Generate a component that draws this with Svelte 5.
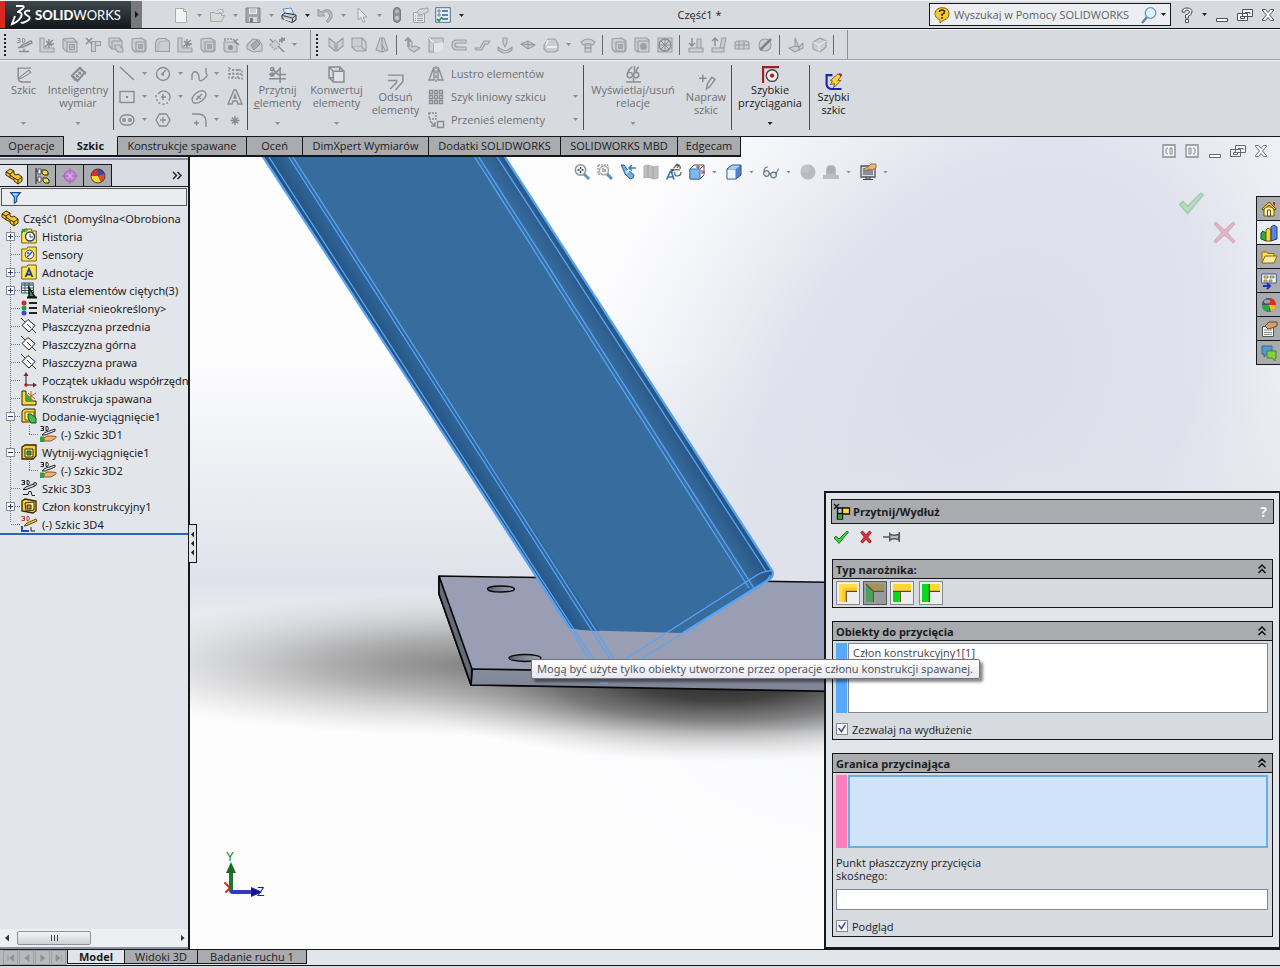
<script>
  const G = 'fill="#cbcdd0" stroke="#9c9ea1" stroke-width="1.1" stroke-linejoin="round"';
  const L = 'fill="none" stroke="#8b8d90" stroke-width="1.4"';
  const I = {
    page: `<path d="M2.5 1.5h8l3 3v11h-11z" fill="#f3f3f4" stroke="#aaacae"/><path d="M10.500 1.500v3h3" fill="none" stroke="#aaacae"/>`,
    open: `<path d="M1.500 14.500v-9h4l1 1h6v2h3l-3 6z" fill="#d7d8da" stroke="#a8aaac"/><path d="M8 4q2-3 5-1l1-1v4h-4l1.500-1.500" fill="#eee" stroke="#a8aaac"/>`,
    save: `<path d="M1 1h14v14.500H1z" fill="#a3a5a7" stroke="#858789"/><path d="M4 1.500h8v5.500H4z" fill="#eee"/><path d="M5 3h6M5 5h6" stroke="#aaa"/><path d="M4 10h8v5H4z" fill="#d8d8d8"/><path d="M5 11h3v4H5z" fill="#777"/>`,
    print: `<path d="M4 7L2 2l8-1 3 6z" fill="#dceafa" stroke="#5b8ecb"/><path d="M1 8l3-2 11 2v5l-4 2.500L1 11.500z" fill="#c9cccf" stroke="#333"/><path d="M1.500 8.500l10 2.500 3-2.500M11.500 11v4" fill="none" stroke="#444"/><path d="M3 12l7 2" stroke="#fff"/>`,
    undo: `<path d="M1 2v7h7L5.500 6.500Q10 3 12 6.500T9 14l1.500 1.500Q17 11 14.500 5.500T4 5z" fill="#b9bbbd" stroke="#96989a"/>`,
    cursor: `<path d="M5 1v12l3-2.500 2 5 2-1-2-4.500h4z" fill="#e7e8ea" stroke="#a2a4a6"/>`,
    light: `<rect x="4.500" y=".5" width="7" height="15" rx="3.500" fill="#8f9193" stroke="#77797b"/><circle cx="8" cy="4.500" r="2" fill="#b5b7b9"/><circle cx="8" cy="11" r="2.200" fill="#c5c7c9"/>`,
    props: `<path d="M1.500 5.500h11v10h-11z" fill="#e9e9ea" stroke="#9fa1a3"/><path d="M3 9h1m1 0h6M3 11.500h1m1 0h6M3 13.500h1m1 0h6" stroke="#999"/><path d="M5 5l3-3 8-1v4l-5 2-4 1z" fill="#d3d4d6" stroke="#a2a4a6"/>`,
    options: `<path d="M.7.700h14.600v14.600H.7z" fill="#e8f1fa" stroke="#4e6e92"/><path d="M3 3h2v2H3zM3 7h2v2H3z" fill="#fff" stroke="#5a7a9c"/><path d="M7 4h6M7 8h6M7 12h6" stroke="#37618f" stroke-width="1.300"/><path d="M2 12l2 2 3-4" fill="none" stroke="#23a03a" stroke-width="1.800"/>`,
    sk3d: `<path d="M1 1.500h3v4H1M2 3.500h2M6.500 1.500v4h1.500q2-2 0-4z" fill="none" stroke="#8f9193"/><path d="M15 4l1 2-9 4-3 .500 2-2.500zM4 10.500l-2 0M3 14.500h5v-3M8 14.500h5" ${L} stroke-width="1.200"/>`,
    weld: `<path d="M1 1h4v10h10v4H1z" ${G}/><path d="M6 10L14 3M10 2v9M7 4l6 5M15 7H8" ${L} stroke-width="1"/>`,
    cube: `<path d="M1 2l10-1 4 4v10H5L1 11z" ${G} fill="#dcdddf"/><path d="M5 5h10M5 5v10M5 5L1 2M7.500 7.500h5v5h-5z" fill="none" stroke="#96989b"/><path d="M8 12l2-4 3 2z" fill="#aaa"/>`,
    trim: `<path d="M6.500 4.500h4v10h-4zM10.500 4.500h5v4h-5z" ${G}/><path d="M1 1l6 6M7 1L1 7" stroke="#8b8d90" stroke-width="1.500"/>`,
    boss: `<path d="M1 1h10l3 3v8H4l-3-3z" ${G} fill="#dcdddf"/><path d="M4 4h10M4 4v8" fill="none" stroke="#96989b"/><path d="M7 8h4l4 4v3h-5l-3-3z" ${G} fill="#aeb0b3"/>`,
    cut: `<path d="M1 2l9-1 5 3v9l-2 2H4l-3-3z" ${G} fill="#dcdddf"/><path d="M5 5h9v9H5z" ${G} fill="#bcbec0"/><path d="M7 7h5v5H7z" fill="#a5a7a9"/>`,
    fillet: `<path d="M1.500 14.500v-9q1-4 5-4h5l4 3v10z" ${G} fill="#d6d7d9"/><path d="M4 14V8q1-4 5-4h6" fill="none" stroke="#b0b2b4"/>`,
    holes: `<path d="M1 5h10l3 2v8H3l-2-2z" ${G}/><circle cx="7.500" cy="10.500" r="2.500" fill="#909294"/><path d="M2 1v3M5 1v2M8 1v2M10 2l6 6M15 2l-4 3" ${L} stroke-width="1"/>`,
    chamfer: `<path d="M1 8l6-6 6 1 3 5v6l-8 1-7-3z" ${G} fill="#d8d9db"/><path d="M5 8l6-5 3 4-6 6z" fill="#a9abad" stroke="#8f9193"/>`,
    ref: `<path d="M1 8l5-5 5 5-5 5z" ${G} fill="#dcdddf" stroke-dasharray="2 1"/><path d="M9 9l6 6M10 5l6-4M13 0v6M10 3h6M1 2l3 3" ${L} stroke-width="1"/>`,
    loft: `<path d="M1 1l6 5v8L1 9zM15 1L9 6v8l6-5z" ${G}/><path d="M7 14l1 1 1-1V6L8 7 7 6z" fill="#a9abae"/>`,
    bend: `<path d="M1 1h10v9H1z" ${G} fill="#b3b5b8"/><path d="M1 10l4 4h10l-4-4M11 1l4 4v9" ${G}/>`,
    cone: `<path d="M6 1h4l4 12-6 2-6-2z" ${G}/><path d="M8 1v14M8 8l3 5" stroke="#909294"/>`,
    flange: `<path d="M4 3l3 2v5l3-1 5 2-6 4-5-3z" ${G}/><path d="M0 4l3-3 3 3M3 1v9" ${L}/>`,
    miter: `<path d="M1 1h14v5H6v9H1z" ${G} fill="#b3b5b7"/><path d="M6 6l9-1v6l-4 4H6z" fill="#e5e6e7"/><path d="M1 1l5 5" stroke="#fff"/>`,
    hem: `<path d="M15 3H6Q1 3 1 8t5 5h9v-3H7Q4 10 4 8t3-2h8z" ${G}/>`,
    jog: `<path d="M1 11l5 0 4-7h6l-2 3h-3L8 13H2z" ${G}/>`,
    sbend: `<path d="M6 1h4v5l-2 4-2-4zM1 10q7 7 14 0v3q-7 6-14 0z" ${G}/>`,
    cross: `<path d="M1 7l7-3 7 4-7 4z" ${G}/><path d="M1 7l14 1M8 4v8" stroke="#909294"/>`,
    corner: `<path d="M1 8l4-6h7l3 5v6l-3 2H4l-3-3z" ${G}/><path d="M4 10h10M5 3l-2 5" stroke="#eee" stroke-width="2"/>`,
    form: `<path d="M1 5q7-6 14 0l-2 3q-5-3-10 0zM5 8h6v7H5z" ${G}/><path d="M5 11h6" stroke="#888"/>`,
    vent: `<rect x="1" y="1" width="14" height="14" ${G} fill="#ddd"/><circle cx="8" cy="8" r="6" ${L}/><path d="M8 2v12M2 8h12M4 4l8 8M12 4l-8 8" stroke="#8b8d90"/>`,
    ball: `<path d="M1 1h11l3 2v12H4l-3-2z" ${G} fill="#ddd"/><path d="M4 4h11M4 4v11" stroke="#999"/><circle cx="9.500" cy="9.500" r="3.500" fill="#9fa1a4"/>`,
    down: `<path d="M4 1v7M1 6l3 3 3-3" ${L}/><path d="M9 2h4v9H9zM1 11h14v4H1z" ${G}/>`,
    up: `<path d="M4 9V2M1 4l3-3 3 3" ${L}/><path d="M11 1h4l-2 10H9zM1 11h12v4H1z" ${G}/>`,
    flat: `<path d="M1 12V7q0-3 3-3h8q3 0 3 3v5z" ${G}/><path d="M5 4v8M10 4v8M1 8h14" stroke="#999"/>`,
    nobend: `<circle cx="8" cy="8" r="6" ${G} stroke-width="2.500"/><path d="M3 13L14 2" stroke="#808284" stroke-width="2.500"/>`,
    rip: `<path d="M7 1v8l-6 2 6 4 8-4V6l-4 4z" ${G}/><path d="M7 9l4 1v4" fill="none" stroke="#909294"/>`,
    conv: `<path d="M2 5l7-4 6 3v6l-6 5-7-3z" ${G}/><path d="M2 5l6 3 7-4M8 8v7" fill="none" stroke="#eee"/>`,
    sketch: `<path d="M15 2H3v9q0 4 4 4h8" ${L} stroke-width="2"/><path d="M5 10l8-6 2 2-8 5-3 1z" fill="#e0e1e3" stroke="#8b8d90"/>`,
    dim: `<path d="M2 9l7-7 5 4-7 8z" fill="none" stroke="#8b8d90" stroke-width="2"/><path d="M6 10l4-4M6 7.500V10h2.500M7.500 6H10v2.500M1 9l4 5M9 1l2 1M14 6l1 2" fill="none" stroke="#8b8d90"/>`,
    line: `<path d="M1 1l14 13" ${L} stroke-width="2"/>`,
    circle: `<circle cx="8" cy="8" r="6.500" ${L}/><path d="M7 8l4-4M6 8h3M8 7v3" ${L}/>`,
    spline: `<path d="M1 14V9q1-4 4-3t3 6 5 1 2-6V2" ${L} stroke-width="1.800"/>`,
    plane: `<path d="M2 2l4 2h9v9l-4-1H2z" ${L} stroke-width="1" stroke-dasharray="2 1.500"/><path d="M6 3v10M11 3v9M2 8h13" ${L} stroke-width="1" stroke-dasharray="2 1.500"/>`,
    rect: `<rect x="1" y="2.500" width="14" height="11" ${L} stroke-width="1.600"/><path d="M7 7h2v2H7z" fill="#888"/>`,
    arc: `<path d="M3 5Q7 0 12 3t2 8" ${L} stroke-width="1.800"/><path d="M1 6q0 8 6 9t7-4" ${L} stroke-dasharray="2 2"/><path d="M6 8h5M8 5v6" ${L} stroke-width="1"/>`,
    ellipse: `<ellipse cx="8" cy="8" rx="8" ry="4.800" transform="rotate(-38 8 8)" ${L}/><path d="M5 11l6-6M6 7l4 3" ${L} stroke-width="1"/>`,
    text: `<path d="M1 15l6-14h2l6 14h-4l-1-3H6l-1 3z" ${L} stroke-width="1.200"/><path d="M7 9l1-3 1 3z" ${L} stroke-width="1"/>`,
    slot: `<rect x="1" y="3" width="14" height="10" rx="5" ${L} stroke-width="1.700"/><path d="M4 7h2v2H4zM10 7h2v2h-2z" ${L} stroke-width="1"/>`,
    poly: `<path d="M4.500 2h7l3.500 6-3.500 6h-7L1 8z" ${L} stroke-width="1.600"/><path d="M5 8h6M8 5v6" ${L}/>`,
    fil: `<path d="M1 2h6q8 0 8 8v5" ${L} stroke-width="1.800"/><path d="M3 11h5M5.500 8.500v5" ${L} stroke-width="1"/>`,
    point: `<path d="M8 4v9M3.500 8.500h9M5 5.500l6 6M11 5.500l-6 6" ${L} stroke-width="1"/>`,
    cutline: `<path d="M0 8h5M11 8h5M0 12h16" ${L} stroke-width="2"/><path d="M10.500 1v15M3 3l7 6M3 9l7-6" ${L}/><circle cx="3" cy="3" r="1.500" ${L} stroke-width="1"/><circle cx="3" cy="8" r="1.500" ${L} stroke-width="1"/>`,
    box: `<path d="M1 1h10v10H1zM5 5L1 1M11 1l4 4M1 11l4 4" ${L}/><path d="M5 5h10v10H5z" fill="#e2e3e5" stroke="#8b8d90" stroke-width="1.400"/>`,
    offset: `<path d="M1 2h14v6l-7 8M1 7h8v2l-6 6" ${L} stroke-width="2"/>`,
    mirror: `<path d="M6 1L1 14h5V1M10 1l5 13h-5V1" ${L}/><path d="M8 0v16" stroke="#8b8d90" stroke-width="1.400" stroke-dasharray="3 1.500"/>`,
    pattern: `<path d="M1.500 1.500h3v3h-3zM6.500 1.500h3v3h-3zM11.500 1.500h3v3h-3zM1.500 6.500h3v3h-3zM6.500 6.500h3v3h-3zM11.500 6.500h3v3h-3zM1.500 11.500h3v3h-3zM6.500 11.500h3v3h-3zM11.500 11.500h3v3h-3z" ${L} stroke-width="1.200"/>`,
    move: `<path d="M1 1h7v6H1z" ${L} stroke-dasharray="2 1"/><path d="M9.500 9.500h6v6h-6z" ${L} stroke-width="1.800"/><path d="M2 9l5 5M3 14h4v-4" ${L}/>`,
    relation: `<path d="M1 15h14" ${L} stroke-width="2"/><path d="M2 8q2-6 5-7M9 0v7M13 1q-3 2-2 6" ${L} stroke-width="1.200"/><circle cx="4.500" cy="8.500" r="2.500" ${L}/><circle cx="10.500" cy="8.500" r="2.500" ${L}/><path d="M8 11v4" ${L}/>`,
    repair: `<path d="M1 5h7M4.500 1.500v7" ${L} stroke-width="1.800"/><path d="M8 15l1-5 4-6 3 2-5 7z" ${L} stroke-width="1"/>`,
    snaps: `<path d="M1 16V1h15" fill="none" stroke="#a51d22" stroke-width="2"/><circle cx="9.500" cy="9" r="5.500" fill="#eceef0" stroke="#444" stroke-width="1.300"/><circle cx="9.500" cy="9" r="2" fill="#d20d18"/>`,
    rapid: `<path d="M7 2H1.500v9q1 4 5 4h9" fill="none" stroke="#1d20b5" stroke-width="2"/><path d="M5 7l7-6 4 1-4 5h3l-7 7 1-4-4 1 2-3.500z" fill="#ffd43a" stroke="#6d4d14" stroke-width=".8"/><path d="M13 0l3 1-1.500 3z" fill="#a22"/>`,
    bubble: `<path d="M8 .7q7 0 7 6 0 5-5 6.300L6 16V13Q1 11 1 6.500 1.500 1 8 .700z" fill="#f5c837" stroke="#8b6508"/><path d="M5.500 5q0-2 2.500-2t2.500 2Q10.500 6.500 8 7.500V9" fill="none" stroke="#3a2c05" stroke-width="1.500"/><path d="M7.200 10h1.700v1.700H7.200z" fill="#3a2c05"/>`,
    search: `<path d="M6 10l-5 6" stroke="#5e87ac" stroke-width="2.500"/><circle cx="9.500" cy="6" r="5.300" fill="#e1f1fb" stroke="#6d9abd" stroke-width="1.300"/>`,
    help: `<path d="M3 5q0-4 5-4t5 4q0 3-3.500 4v2h-3V8q4-1 4-3t-2.500-2T5.500 5.500zM6.500 12.500h3v3h-3z" fill="#fff" stroke="#4c4e51"/>`,
    min: `<path d="M2.500 11.500h11v3h-11z" fill="#fff" stroke="#505258"/>`,
    restore: `<path d="M5.500 2.500h10v7h-10zM.5 6.500h10v7H.5z" fill="#f5f6f8" stroke="#505258"/><path d="M3.500 9.500h4v2h-4zM8 5.500h5v1.500" fill="none" stroke="#505258"/>`,
    close: `<path d="M2.500 2.500h3L8 5.500l2.500-3h3v1L9.500 8l4 4.500v1h-3L8 10.500l-2.500 3h-3v-1L6.500 8l-4-4.500z" fill="#fff" stroke="#505258"/>`,
    paneL: `<path d="M2 2h12v12H2z" fill="#f4f5f8" stroke="#777a80" stroke-width="1.300"/><path d="M7 5L5 6v4l2 1M9 5h2v6H9z" fill="none" stroke="#777a80"/>`,
    paneR: `<path d="M2 2h12v12H2z" fill="#f4f5f8" stroke="#777a80" stroke-width="1.300"/><path d="M9 5l2 1v4l-2 1M5 5h2v6H5z" fill="none" stroke="#777a80"/>`,
    zoomfit: `<path d="M10 10l5 5" stroke="#5b93cc" stroke-width="3"/><circle cx="6.500" cy="6" r="5.200" fill="#f1f5f8" stroke="#8c9196" stroke-width="1.500"/><path d="M6.500 3v2M6.500 7v2M3.500 6h2M7.500 6h2" stroke="#333" stroke-width="1.300"/>`,
    zoomarea: `<path d="M10 10l5 5" stroke="#5b93cc" stroke-width="3"/><path d="M1 1h10v9H1z" fill="none" stroke="#777" stroke-dasharray="2 1"/><circle cx="7" cy="6.500" r="4.500" fill="#f1f5f8cc" stroke="#8c9196"/><path d="M6 4v4M8 5v3" stroke="#666"/>`,
    prev: `<path d="M1 1l3 0 3 4 7 6-1 3-3 1-5-5-2-5z" fill="#71b0e5" stroke="#2a659c"/><path d="M6 9l4-4" stroke="#d8efff" stroke-width="2"/><path d="M16 4H9m3-3L9 4l3 2.500" fill="none" stroke="#3e79b3" stroke-width="1.500"/>`,
    section: `<path d="M1 2q4-2 7 0t7 0v12q-4 2-7 0t-7 0z" fill="#bcbec1" stroke="#adafb2"/><path d="M5 2v12M10 3v12" stroke="#a0a2a5"/>`,
    orient: `<path d="M.7 15.500L4 8h1.500L8 15.500M2.500 13h4.500" fill="none" stroke="#3676bb" stroke-width="1.700"/><path d="M8 4q1-3 4-3 3 1 2 4M6 7q2-2 8-1M15 8q0 4-4 4-3 0-2-4M10 0l3 1-2 3M6 9l-1-3 3-1" fill="none" stroke="#555" stroke-width="1.200"/>`,
    views: `<path d="M1 5l4-4h10v10l-4 4H1z" fill="#f6fafe" stroke="#50525a"/><path d="M1 5h10v10H1z" fill="#7fb8ec" stroke="#3f77ad"/><path d="M11 5l4-4" stroke="#555"/><path d="M9 1v4M7 3h4M13 8h3M13 6v4" stroke="#c12d30"/>`,
    style: `<path d="M1 5l5-4h9v10l-5 4H1z" fill="#4c82cb" stroke="#3b4e74"/><path d="M1.500 5.500h8v9h-8z" fill="#eaf4ff"/><path d="M2 5l4-3.500h8L10 5z" fill="#a9cdf3"/>`,
    glasses: `<circle cx="3.500" cy="9.500" r="2.800" fill="#d9eafa" stroke="#6c7681" stroke-width="1.200"/><circle cx="10.500" cy="11" r="2.800" fill="#d9eafa" stroke="#6c7681" stroke-width="1.200"/><path d="M1 8q0-5 4-5M6 10q1-1 2 0M13 10q2-5 3-5" fill="none" stroke="#6c7681" stroke-width="1.200"/>`,
    sphere: `<circle cx="8" cy="8" r="7.500" fill="#b9bbbe"/><circle cx="5.500" cy="5" r="4" fill="#c1c3c6"/>`,
    scene: `<path d="M0 15v-4h3V6q0-5 5-5t5 5v5h3v4z" fill="#bcbec1"/><circle cx="8" cy="6" r="4" fill="#adafb2"/>`,
    monitor: `<path d="M1 2h14v11H1z" fill="#dadbdc" stroke="#53565a" stroke-width="1.300"/><path d="M3 4h10v7H3z" fill="#848e9c"/><path d="M3 15.500h10M6 13v2h4v-2" stroke="#444" fill="none"/><path d="M4 5l4-2 3-3h5v4l-4 2-3-1-4 2z" fill="#eeb676" stroke="#875f36" stroke-width=".8"/>`,
    part: `<path d="M0 4l4-3 4 2v3l2 1 2-1 4 3v4l-4 3-4-3v-2l-2 0-6-4z" fill="#f4c62c" stroke="#3b2b00"/><path d="M0 4l4 2 4-3M4 6v4M8 10l4 2 4-3M12 12v4M4 7l4 3" fill="none" stroke="#3b2b00"/>`,
    config: `<path d="M2 0v16M2 3h5M2 12h5" stroke="#222" fill="none"/><path d="M4 1h3v5H4zM4 9h3v5H4z" fill="#fff" stroke="#555"/><path d="M8 2h4l2 2v3h-4L8 5zM9 10h4l2 2v3h-4l-2-2z" fill="#ffd633" stroke="#222"/>`,
    target: `<circle cx="8" cy="8" r="5.500" fill="none" stroke="#c45edb" stroke-width="1.600"/><path d="M8 0v16M0 8h16" stroke="#c45edb" stroke-width="1.400"/><circle cx="8" cy="8" r="2" fill="#dca8e5"/>`,
    beach: `<circle cx="8" cy="8" r="7" fill="#286ccf"/><path d="M8 1a7 7 0 0 0-7 7l7 1z" fill="#e22b25"/><path d="M1 8a7 7 0 0 0 10 6L8 8z" fill="#ffd52e"/><path d="M8 1a7 7 0 0 1 6.500 5L8 8z" fill="#3a4aa0"/><path d="M14.500 6L8 8l3 6a7 7 0 0 0 3.500-8z" fill="#e5492d"/><circle cx="8" cy="8" r="7" fill="none" stroke="#333" stroke-width=".8"/>`,
    funnel: `<path d="M2 2h12l-4.500 5.500V13L6.500 15V7.500z" fill="#6fb5f5" stroke="#1c4c9d" stroke-width="1.400"/><path d="M5 4h5" stroke="#fff"/>`,
    hist: `<path d="M.7 3h5l1-2h4v2h4.600v12H.7z" fill="#ffe352" stroke="#7c6408"/><circle cx="9" cy="8.500" r="4.500" fill="#fff" stroke="#283a80" stroke-width="1.400"/><path d="M9 6v3h3" fill="none" stroke="#283a80"/><path d="M1 1l3 3M1 5q1-4 5-4" stroke="#1f9a36" stroke-width="1.500" fill="none"/>`,
    sens: `<path d="M.7 3h5l1-2h8.600v14H.7z" fill="#ffe352" stroke="#7c6408"/><circle cx="8.500" cy="8.500" r="4.300" fill="#eef" stroke="#444"/><path d="M6 11l5-5M6 7h2" stroke="#1c4faf" stroke-width="1.300"/>`,
    ann: `<path d="M.7 3h5l1-2h8.600v14H.7z" fill="#ffe352" stroke="#7c6408"/><path d="M4.500 13L8 5l3.500 8M6 10.500h4" fill="none" stroke="#1c3f8f" stroke-width="1.800"/>`,
    list: `<path d="M.5 1h12v10H.5z" fill="#fff" stroke="#39536b"/><path d="M.5 1h12v3H.5z" fill="#7893ae"/><path d="M.5 6h12M.5 8.500h12M4 1v10M8 1v10" stroke="#39536b"/><path d="M8 5.500V15h6z" fill="#26a643" stroke="#111" stroke-width="1.500"/><path d="M6 15.500h10" stroke="#111" stroke-width="2"/>`,
    mat: `<circle cx="3" cy="3" r="2.500" fill="#d02634"/><circle cx="3" cy="8" r="2.500" fill="#2c9b38"/><circle cx="3" cy="13" r="2.500" fill="#2c4fd0"/><path d="M8 3h8M8 8h8M8 13h8" stroke="#222" stroke-width="1.800"/>`,
    datum: `<path d="M1 7.500l6-6 7 6-6 6.500z" fill="#fafafa" stroke="#222"/><path d="M0 0l4 4M11 11l4 4M6 6l4 4" stroke="#222" stroke-width=".9"/>`,
    origin: `<path d="M5 13V3M5 13h9" stroke="#222"/><path d="M5 0L2.500 4h5zM16 13l-4-2.500v5z" fill="#9c1721"/><circle cx="5" cy="13" r="1.800" fill="#c01b25"/>`,
    weldc: `<path d="M1 1h4v10h10v4H1z" fill="#ffd93c" stroke="#2d2400"/><path d="M5 11V3l8 8z" fill="#3cac47"/><path d="M7 8l8-5M10 1v8M7 3l7 6" stroke="#c2621b"/>`,
    bossc: `<path d="M1 3l3-2h10v9l-3 4H1z" fill="#ffd93c" stroke="#332700"/><path d="M4 4h9v8H4z" fill="#fff4b0" stroke="#665200"/><path d="M7 6h3l5 4v5h-5L7 10z" fill="#4abb51" stroke="#184f1d"/>`,
    cutc: `<path d="M1 3l3-2h11v11l-3 3H1z" fill="#ffcb2f" stroke="#332700" stroke-width="1.300"/><path d="M4 5h8v8H4z" fill="#fff4b0" stroke="#332700"/><path d="M6 7h4v4H6z" fill="#31a341" stroke="#184f1d"/>`,
    sk: `<path d="M.5.500h3v4h-3M1.500 2.500h2M6 .500v4h1.500q2-2 0-4z" fill="none" stroke="#222"/><circle cx="14" cy="4" r="1.500" fill="none" stroke="#222"/><path d="M12.500 4L5 7 2 9.500h3L14 6M2 14.500h5l1-3h2l1 4h3" fill="none" stroke="#222"/>`,
    skhand: `<path d="M.5.500h3v4h-3M1.500 2.500h2M6 .500v4h1.500q2-2 0-4z" fill="none" stroke="#222"/><path d="M15 3L5 6.500 2 9h3l10-4z" fill="#eee" stroke="#222"/><path d="M4 12l3-2h4l5 .500q1 1-1 2l-4 2.500H4z" fill="#eeb477" stroke="#8c5a26"/><path d="M0 10.500h4v5.500H0z" fill="#2fa14d"/>`,
    member: `<path d="M1 3l3-2 11 2v10l-3 2-11-2z" fill="#ffcb2f" stroke="#332700" stroke-width="1.300"/><path d="M4 5l9-1v8l-8 1z" fill="#fff4b0" stroke="#332700"/><path d="M6 7h4v4H6z" fill="#ce952a" stroke="#332700"/>`,
    skact: `<path d="M.5.500h3v4h-3M1.500 2.500h2M6 .500v4h1.500q2-2 0-4z" fill="none" stroke="#b4412c"/><path d="M15 3L6 7 3 10l3-.500L16 5z" fill="#ffc638" stroke="#5b4410"/><path d="M1 10v5h7" fill="none" stroke="#2349c4" stroke-width="2"/><path d="M10 11v4h4" fill="none" stroke="#222"/>`,
    home: `<path d="M3 7v8h10V7" fill="#fff2a0" stroke="#6e4a00"/><path d="M.8 8L8 1l7.200 7-1.200 1L8 4 2 9z" fill="#ffcf3a" stroke="#6e4a00"/><path d="M6.500 9h3v6h-3z" fill="#fff" stroke="#6e4a00"/><path d="M12 1h2v4l-2-2z" fill="#ba2a20"/>`,
    books: `<path d="M0 8l2-2 3 2v8l-5-2z" fill="#2fae3f" stroke="#0e5d1b"/><path d="M5 5l2-2 3 2v11H5z" fill="#ffd42f" stroke="#765900"/><path d="M10 2l3-2 3 2v12l-6 2z" fill="#5b86d6" stroke="#203f83"/>`,
    folder: `<path d="M1 14V3h5l1 1.500h6V7" fill="#ffdd5e" stroke="#8f6a08"/><path d="M1 14l3-7h12l-3 7z" fill="#ffeb9c" stroke="#8f6a08"/>`,
    palette: `<path d="M.7 1h14.600v9H.7z" fill="#f0f5fb" stroke="#3f5f92"/><path d="M3 3h4v2H3zM9 3h4v2H9zM3 7h3v2H3zM8 7h3v2H8z" fill="#f4d943" stroke="#555" stroke-width=".6"/><path d="M2 13h7m-3-3l3 3-3 3" fill="none" stroke="#1f31b5" stroke-width="2"/>`,
    globe: `<circle cx="8" cy="8" r="7" fill="#2a62c4"/><path d="M8 8V1a7 7 0 0 0-7 7z" fill="#4b4f66"/><path d="M8 8h7a7 7 0 0 0-7-7z" fill="#dc3224"/><path d="M8 8H1a7 7 0 0 0 7 7z" fill="#2aaa44"/><path d="M8 8h7a7 7 0 0 1-5 6.500z" fill="#f7bc22"/><ellipse cx="6" cy="4.500" rx="3" ry="2" fill="#fff7"/>`,
    propc: `<path d="M1.500 5.500h11v10h-11z" fill="#f7f7f7" stroke="#555"/><path d="M3 9h8M3 11.500h8M3 13.500h8" stroke="#888"/><path d="M4 5l4-4h8v4l-5 2-4 1z" fill="#d3a26a" stroke="#6a4720"/>`,
    chat: `<path d="M1 1h10v8H6l-3 3V9H1z" fill="#4f9ad0" stroke="#2f6895"/><path d="M6 6h9v7h-1v3l-3-3H6z" fill="#86d03e" stroke="#4d8a1b"/>`,
    check: `<path d="M1 9l2-2 3 3 8-8 1.500 1L6 14.500z" fill="#3fd03f" stroke="#0e7c1b" stroke-width=".9"/>`,
    x: `<path d="M2 3l2-2 4 4.500L12 1l2 2-4 5 4 5-2 2-4-4.500L4 15l-2-2 4-5z" fill="#e03236" stroke="#8c0f14" stroke-width=".9"/>`,
    xthin: `<path d="M1.500 2.500l1-1L8 6.500l5.500-5 1 1L9.500 8l5 5.500-1 1L8 9.500l-5.500 5-1-1 5-5.500z" fill="#e8434a" stroke="#a02028" stroke-width=".8"/>`,
    pin: `<path d="M0 8h6M6 4v8M6 5.500q4 2 8 0v5q-4-2-8 0M14.500 3.500v9" fill="#bcbec0" stroke="#55575a" stroke-width="1.300"/>`,
    trimc: `<path d="M3.500 4h5v11h-5z" fill="#bbb" stroke="#111" stroke-width="1.300"/><path d="M4 10h4v5H4z" fill="#2ea52f"/><path d="M3.500 9.500h5M8.500 4h7v6h-7z" fill="#ffde33" stroke="#111" stroke-width="1.300"/><path d="M0 0l5 5M5 0L0 5" stroke="#111" stroke-width="1.300"/>`,
    c1: `<path d="M0 0h16v6H6v10H0z" fill="#ffc824"/><path d="M0 0h16v3H3v13H0z" fill="#ffdf44"/><path d="M16 6.500H6.500V16" fill="none" stroke="#6b4309"/>`,
    c2: `<path d="M0 0h16v6H6z" fill="#a49257"/><path d="M0 0l6 6v10H0z" fill="#4ba05a"/><path d="M0 0l6.500 6.500V16M6.500 6.500H16" fill="none" stroke="#585033"/>`,
    c3: `<path d="M0 0h16v6H0z" fill="#ffd62f"/><path d="M0 7h6v9H0z" fill="#0ad81e"/><path d="M0 6.500h16M6.500 7v9" stroke="#6b4309"/>`,
    c4: `<path d="M7 0h9v6H7z" fill="#ffd62f"/><path d="M0 0h6.500v16H0z" fill="#0ad81e"/><path d="M6.500 0v16M7 6.500h9" stroke="#594309"/>`,
    up2: `<path d="M4.500 7.500L8 4l3.500 3.500M4.500 12L8 8.500l3.500 3.500" fill="none" stroke="#111" stroke-width="1.500"/>`
  };

  const quick = [['page', 'Nowy', 1], ['open', 'Otwórz', 1], ['save', 'Zapisz', 1], ['print', 'Drukuj', 2], ['undo', 'Cofnij', 1], ['cursor', 'Wybierz', 1], ['light', 'Przebuduj', 0], ['props', 'Właściwości', 0], ['options', 'Opcje', 2]];
  const weldBar = ['sk3d', 'weld', 'cube', 'trim', 'boss', 'cut', 'fillet', 'weld', 'cut', 'holes', 'chamfer', 'ref', '>'];
  const sheetBar = ['loft', 'bend', 'cone', '|', 'flange', 'miter', 'hem', 'jog', 'sbend', 'cross', 'corner', '>', 'form', '|', 'cut', 'ball', 'vent', '|', 'down', 'up', 'flat', 'nobend', '|', 'rip', 'conv', '|'];
  const drawTools = ['line', 'circle', 'spline', 'plane', 'rect', 'arc', 'ellipse', 'text', 'slot', 'poly', 'fil', 'point'];
  const noArrow = ['poly'];
  const tabs = ['Operacje', 'Szkic', 'Konstrukcje spawane', 'Oceń', 'DimXpert Wymiarów', 'Dodatki SOLIDWORKS', 'SOLIDWORKS MBD', 'Edgecam'];
  const tree = [
    ['hist', 'Historia', '+'], ['sens', 'Sensory'], ['ann', 'Adnotacje', '+'], ['list', 'Lista elementów ciętych(3)', '+'],
    ['mat', 'Materiał <nieokreślony>'], ['datum', 'Płaszczyzna przednia'], ['datum', 'Płaszczyzna górna'], ['datum', 'Płaszczyzna prawa'],
    ['origin', 'Początek układu współrzędn'], ['weldc', 'Konstrukcja spawana'], ['bossc', 'Dodanie-wyciągnięcie1', '−'],
    ['skhand', '(-) Szkic 3D1', '', 1], ['cutc', 'Wytnij-wyciągnięcie1', '−'], ['skhand', '(-) Szkic 3D2', '', 1],
    ['sk', 'Szkic 3D3'], ['member', 'Człon konstrukcyjny1', '+'], ['skact', '(-) Szkic 3D4']
  ];
  const viewTools = ['zoomfit', 'zoomarea', 'prev', 'section', 'orient', 'views', '>', 'style', '>', 'glasses', '>', 'sphere', 'scene', '>', 'monitor', '>'];
  const taskTabs = ['home', 'books', 'folder', 'palette', 'globe', 'propc', 'chat'];
  let bodies = $state('Człon konstrukcyjny1[1]');
  let extend = $state(true);
  let preview = $state(true);
  let corner = $state(1);
</script>

{#snippet icon(name, size = 16)}
  <svg class="ic" width={size} height={size} viewBox="0 0 16 16" aria-hidden="true">{@html I[name]}</svg>
{/snippet}

{#snippet big(name, a, b, arrow, cls)}
  <button class="big {cls}">
    {@render icon(name, 17)}
    <span>{a}</span><span>{b}</span>
    {#if arrow}<i class="arr"></i>{/if}
  </button>
{/snippet}

<div class="app">
  <header class="title">
    <div class="brand">
      <svg width="24" height="22" viewBox="0 0 24 22" aria-hidden="true"><path d="M7 2h7q2 1-1 3l-4 3M8 8h2q4 1 2 5-3 5-9 7l3-8M21 7q-4-1-5 1t3 4-1 5-6 1" fill="none" stroke="#fff" stroke-width="1.900"/></svg>
      <span class="word"><b>SOLID</b>WORKS</span>
    </div>
    <button class="flyout" aria-label="Menu"><i></i></button>
    <div class="quick">
      {#each quick as [n, label, a]}
        <button class="qb" aria-label={label}>{@render icon(n)}</button>
        {#if a}<i class="arr wide" class:dark={a === 2}></i>{/if}
      {/each}
    </div>
    <h1>Część1 *</h1>
    <div class="search">
      {@render icon('bubble')}
      <input type="text" aria-label="Wyszukaj" placeholder="Wyszukaj w Pomocy SOLIDWORKS" />
      {@render icon('search')}
      <i class="arr dark"></i>
    </div>
    <div class="wins">
      <button aria-label="Pomoc">{@render icon('help')}</button>
      <i class="arr dark"></i>
      <button aria-label="Minimalizuj">{@render icon('min')}</button>
      <button aria-label="Przywróć">{@render icon('restore')}</button>
      <button aria-label="Zamknij">{@render icon('close')}</button>
    </div>
  </header>

  <div class="bar">
    <div class="strip">
      <i class="grip"></i>
      {#each weldBar as n}
        {#if n === '>'}<i class="arr mid"></i>{:else}<button class="tb" aria-label={n}>{@render icon(n)}</button>{/if}
      {/each}
    </div>
    <div class="strip second">
      <i class="grip"></i>
      {#each sheetBar as n}
        {#if n === '>'}<i class="arr mid"></i>{:else if n === '|'}<i class="sep"></i>{:else}<button class="tb" aria-label={n}>{@render icon(n)}</button>{/if}
      {/each}
    </div>
  </div>

  <div class="ribbon">
    {@render big('sketch', 'Szkic', '', true, 'w46')}
    {@render big('dim', 'Inteligentny', 'wymiar', true, 'w62')}
    <i class="rule"></i>
    <div class="draw">
      {#each drawTools as n, i}
        <button class="dt" aria-label={n}>{@render icon(n)}{#if i % 4 !== 3}<i class="arr" class:hid={noArrow.includes(n)}></i>{/if}</button>
      {/each}
    </div>
    <i class="rule"></i>
    <button class="big w60">{@render icon('cutline', 17)}<span>Przytnij</span><span><u>e</u>lementy</span><i class="arr"></i></button>
    {@render big('box', 'Konwertuj', 'elementy', true, 'w60')}
    {@render big('offset', 'Odsuń', 'elementy', false, 'w60 low')}
    <div class="lines">
      <button>{@render icon('mirror')}<span>Lustro elementów</span></button>
      <button>{@render icon('pattern')}<span>Szyk liniowy szkicu</span><i class="arr"></i></button>
      <button>{@render icon('move')}<span>Przenieś elementy</span><i class="arr"></i></button>
    </div>
    <i class="rule"></i>
    {@render big('relation', 'Wyświetlaj/usuń', 'relacje', true, 'w98')}
    {@render big('repair', 'Napraw', 'szkic', false, 'w48 low')}
    <i class="rule"></i>
    {@render big('snaps', 'Szybkie', 'przyciągania', true, 'w76 on')}
    <i class="rule"></i>
    {@render big('rapid', 'Szybki', 'szkic', false, 'w46 on low')}
  </div>

  <main>
    <nav class="tabs">
      {#each tabs as t, i}<button class:active={i === 1}>{t}</button>{/each}
    </nav>

    <aside>
      <div class="ptabs">
        {#each ['part', 'config', 'target', 'beach'] as n, i}
          <button class:active={i === 0} aria-label={n}>{@render icon(n)}</button>
        {/each}
        <button class="more" aria-label="Więcej"><svg width="10" height="9" viewBox="0 0 10 9"><path d="M1 1l3.500 3.500L1 8M5.500 1L9 4.500 5.500 8" fill="none" stroke="#222" stroke-width="1.400"/></svg></button>
      </div>
      <label class="filter">{@render icon('funnel', 13)}<input type="text" aria-label="Filtr" /></label>
      <div class="root">{@render icon('part')}<span>Część1&nbsp; (Domyślna&lt;Obrobiona</span></div>
      <ul>
        {#each tree as [n, label, ex, nested]}
          <li class:nested>
            {#if ex}<button class="ex" aria-label="Rozwiń {label}"><svg width="9" height="9" viewBox="0 0 9 9"><path d={ex === '+' ? 'M2 4.500h5M4.500 2v5' : 'M2 4.500h5'} stroke="#2c3c78"/></svg></button>{/if}
            {@render icon(n)}<span>{label}</span>
          </li>
        {/each}
      </ul>
      <div class="rollback"></div>
      <div class="hscroll">
        <button class="lt" aria-label="W lewo"></button>
        <div class="thumb"><i></i><i></i><i></i></div>
        <button class="rt" aria-label="W prawo"></button>
      </div>
      <button class="split" aria-label="Zwiń panel"><i></i><i></i><i></i></button>
    </aside>

    <section class="view">
      <svg class="scene" viewBox="190 137 1090 813" preserveAspectRatio="xMinYMin slice" aria-hidden="true">
        <defs>
          <radialGradient id="sky" gradientUnits="userSpaceOnUse" cx="0" cy="0" r="1" gradientTransform="translate(980 400) rotate(-55) scale(560 390)">
            <stop offset="0" stop-color="#dadde8"/><stop offset=".5" stop-color="#e0e3ed"/><stop offset="1" stop-color="#e8eaf2" stop-opacity="0"/>
          </radialGradient>
          <linearGradient id="haze" x1="0" y1="0" x2="0" y2="1">
            <stop offset="0" stop-color="#dde0e9" stop-opacity="0"/><stop offset=".6" stop-color="#dfe2ea"/><stop offset="1" stop-color="#f2f3f5" stop-opacity="0"/>
          </linearGradient>
          <radialGradient id="shadeA" gradientUnits="userSpaceOnUse" cx="0" cy="0" r="1" gradientTransform="translate(720 680) scale(330 82)">
            <stop offset="0" stop-color="#2c2c2c"/><stop offset=".25" stop-color="#3c3c3c" stop-opacity=".97"/><stop offset=".5" stop-color="#5c5c5c" stop-opacity=".75"/><stop offset=".75" stop-color="#8a8a8a" stop-opacity=".35"/><stop offset="1" stop-color="#bbb" stop-opacity="0"/>
          </radialGradient>
          <radialGradient id="shadeB" gradientUnits="userSpaceOnUse" cx="0" cy="0" r="1" gradientTransform="translate(480 665) scale(400 72)">
            <stop offset="0" stop-color="#6c6c6c" stop-opacity=".9"/><stop offset=".4" stop-color="#858585" stop-opacity=".6"/><stop offset="1" stop-color="#bbb" stop-opacity="0"/>
          </radialGradient>
          <linearGradient id="tubeL" gradientUnits="userSpaceOnUse" x1="400" y1="369" x2="442" y2="342">
            <stop offset="0" stop-color="#24527f"/><stop offset=".35" stop-color="#2e6296"/><stop offset="1" stop-color="#376c9f"/>
          </linearGradient>
          <linearGradient id="tubeR" gradientUnits="userSpaceOnUse" x1="600" y1="350" x2="632" y2="330">
            <stop offset="0" stop-color="#376c9f"/><stop offset="1" stop-color="#204a76"/>
          </linearGradient>
          <linearGradient id="front" x1="0" y1="0" x2="0" y2="1"><stop offset="0" stop-color="#888c9f"/><stop offset="1" stop-color="#7c8093"/></linearGradient>
          <linearGradient id="hole"><stop offset="0" stop-color="#60636f"/><stop offset="1" stop-color="#a2a6b4"/></linearGradient>
        </defs>
        <path d="M190 137h1090v813H190z" fill="#fdfdfe"/>
        <path d="M190 137h1090v813H190z" fill="url(#sky)"/>
        <path d="M190 360h1090v370H190z" fill="url(#haze)"/>
        <path d="M190 730h1090v220H190z" fill="#fdfdfe" opacity=".8"/>
        <path d="M190 590h700v170H190z" fill="url(#shadeB)"/>
        <path d="M190 590h900v180H190z" fill="url(#shadeA)"/>
        <path d="M439 576l1000 16v104L471 685l-32-91z" fill="#9a9eb4" stroke="#080808" stroke-width="1.500"/>
        <path d="M472 669l968 15v18L471 685z" fill="url(#front)" stroke="#080808" stroke-width="1.700"/>
        <path d="M439 576l33 93-1 16-32-91z" fill="#666a78" stroke="#080808" stroke-width="1.700"/>
        <ellipse cx="501" cy="589" rx="13.500" ry="3" fill="url(#hole)" stroke="#080808" stroke-width="1.300"/>
        <ellipse cx="525" cy="658" rx="16" ry="3.500" fill="url(#hole)" stroke="#080808" stroke-width="1.300"/>
        <path d="M250 137h242l281 436q0 4-3 6l-14 9-73 45-74-2-27-1-13-2z" fill="#376c9f"/>
        <path d="M250 137h27l323 494-18-1-13-2z" fill="url(#tubeL)"/>
        <path d="M465 137h27l281 436q0 4-3 6l-14 9z" fill="url(#tubeR)"/>
        <g fill="none" stroke="#58a4f3" stroke-width="1.300">
          <path d="M250 137l320 491" stroke-width="2.300"/><path d="M256 137L597 665M276 137l336 525M280 137l336 525"/>
          <path d="M492 137l281 435q0 5-3 7l-87 54" stroke-width="2.300"/><path d="M484 137l282 434M462 137l287 451M466 137l289 453"/>
          <path d="M773 571q-7-1-16 4L610 669M770 575q-2 7-15 14"/>
        </g>
        <path d="M570 628l20 33M683 633l-58 36M600 683h8" fill="none" stroke="#6fa3dc" stroke-width="2"/>
        <g stroke-linecap="round"><path d="M225 883l5 5-4 4" stroke="#e3262b" stroke-width="2" fill="none"/><path d="M231 891v-20" stroke="#24752b" stroke-width="4"/><path d="M231 862l-5 11h10z" fill="#1e6b25"/><path d="M232 892h18" stroke="#3439c4" stroke-width="4"/><path d="M262 892l-11-5v10z" fill="#14159b"/></g>
        <text x="226" y="861" fill="#1d7a27" font-size="12">Y</text><text x="257" y="896" fill="#1b1c9b" font-size="12">Z</text>
      </svg>

      <div class="hud">
        {#each viewTools as n}
          {#if n === '>'}<i class="arr mid"></i>{:else}<button class="tb" aria-label={n}>{@render icon(n)}</button>{/if}
        {/each}
      </div>
      <div class="docwins">
        {#each ['paneL', 'paneR', 'min', 'restore', 'close'] as n}<button aria-label={n}>{@render icon(n)}</button>{/each}
      </div>
      <div class="confirm">
        <button aria-label="Potwierdź">{@render icon('check', 26)}</button>
        <button class="no" aria-label="Odrzuć">{@render icon('xthin', 25)}</button>
      </div>
      <div class="task">
        {#each taskTabs as n, i}<button class:active={i === 1} aria-label={n}>{@render icon(n)}</button>{/each}
      </div>

      <form class="pm" onsubmit={(e) => e.preventDefault()}>
        <div class="pmhead">{@render icon('trimc')}<h2>Przytnij/Wydłuż</h2><button type="button" aria-label="Pomoc">?</button></div>
        <div class="pmact">
          <button type="button" aria-label="OK">{@render icon('check')}</button>
          <button type="button" aria-label="Anuluj">{@render icon('x', 14)}</button>
          <button type="button" aria-label="Przypnij">{@render icon('pin', 18)}</button>
        </div>
        <section class="grp">
          <h3>Typ narożnika:{@render icon('up2')}</h3>
          <div class="corners">
            {#each ['c1', 'c2', 'c3', 'c4'] as n, i}
              <button type="button" class:sel={corner === i} aria-label="Narożnik {i + 1}" onclick={() => (corner = i)}>{@render icon(n, 18)}</button>
            {/each}
          </div>
        </section>
        <section class="grp">
          <h3 id="g2">Obiekty do przycięcia{@render icon('up2')}</h3>
          <div class="pick"><i></i><textarea readonly aria-labelledby="g2" bind:value={bodies}></textarea></div>
          <label class="chk"><input type="checkbox" bind:checked={extend} />Zezwalaj na wydłużenie</label>
        </section>
        <section class="grp last">
          <h3 id="g3">Granica przycinająca{@render icon('up2')}</h3>
          <div class="pick pink"><i></i><textarea aria-labelledby="g3"></textarea></div>
          <label class="pt" for="point">Punkt płaszczyzny przycięcia skośnego:</label>
          <input class="ptin" id="point" type="text" />
          <label class="chk"><input type="checkbox" bind:checked={preview} />Podgląd</label>
        </section>
      </form>
      <div class="tip" role="tooltip">Mogą być użyte tylko obiekty utworzone przez operacje członu konstrukcji spawanej.</div>
    </section>
  </main>

  <footer>
    <div class="steps">
      {#each ['M5 4v8M12 4L7 8l5 4z', 'M11 4L6 8l5 4z', 'M6 4l5 4-5 4z', 'M12 4v8M5 4l5 4-5 4z'] as d, i}
        <button aria-label="Przewiń {i + 1}"><svg width="15" height="14" viewBox="0 0 16 16"><path {d} fill="#8f9194" stroke="#8f9194"/></svg></button>
      {/each}
    </div>
    <button class="ft active">Model</button><button class="ft">Widoki 3D</button><button class="ft wide">Badanie ruchu 1</button>
  </footer>
</div>

<style>
  :global(body) { margin: 0; }
  .app { height: 100vh; display: flex; flex-direction: column; padding-bottom: 2px; background: #d7dadf; color: #1b1c1e; font: 11px/13px "Open Sans", "Noto Sans", sans-serif; overflow: hidden; }
  .app, .app * { box-sizing: border-box; }
  button { font: inherit; color: inherit; background: none; border: 0; padding: 0; margin: 0; display: flex; align-items: center; justify-content: center; white-space: nowrap; }
  input, textarea { font: inherit; color: inherit; margin: 0; }
  h1, h2, h3, ul { margin: 0; padding: 0; font: inherit; list-style: none; }
  .ic { display: block; flex: none; overflow: visible; }
  .arr { flex: none; width: 5px; height: 3px; background: #8b8d90; clip-path: polygon(0 0, 100% 0, 50% 100%); }
  .arr.dark { background: #222; }
  .arr.wide { margin: 2px 6px 0 7px; }
  .arr.mid { margin: 0 5px 0 4px; }
  .arr.hid { visibility: hidden; }

  .title { flex: none; height: 29px; display: flex; align-items: center; border-top: 1px solid #f2f3f5; border-bottom: 1px solid #16171a; }
  .brand { align-self: stretch; width: 131px; display: flex; align-items: center; gap: 2px; padding-left: 4px; border-left: 5px solid #d9291f; background: linear-gradient(#3d474d, #13191d); color: #fff; }
  .word { font: 13px/16px Lato, sans-serif; }
  .word b { font-weight: 900; }
  .flyout { align-self: stretch; width: 11px; background: #77797c; }
  .flyout i { width: 4px; height: 8px; background: #111; clip-path: polygon(0 0, 100% 50%, 0 100%); }
  .quick { display: flex; align-items: center; margin-left: 30px; }
  .qb { width: 18px; height: 24px; }
  .qb + .qb { margin-left: 5px; }
  h1 { flex: 1; text-align: center; font-size: 11px; }
  .search { width: 242px; height: 23px; display: flex; align-items: center; gap: 4px; padding: 0 4px; border: 1px solid #16171a; background: #eceef1; }
  .search input { flex: 1; min-width: 0; border: 0; padding: 0; background: none; outline: 0; }
  .search input::placeholder { color: #5f6165; opacity: 1; }
  .wins { display: flex; align-items: center; gap: 7px; padding: 0 4px 0 8px; }

  .bar { flex: none; height: 31px; display: flex; border-bottom: 1px solid #9b9da1; border-top: 1px solid #f2f3f5; }
  .strip { display: flex; align-items: center; padding: 0 8px 0 4px; border-right: 1px solid #8d8f93; }
  .strip.second { padding: 0 9px 0 5px; }
  .grip { width: 2px; height: 22px; margin-right: 6px; background: repeating-linear-gradient(#222 0 2px, transparent 2px 4px); }
  .tb { width: 23px; height: 24px; }
  .sep { width: 1px; height: 20px; margin: 0 4px 0 3px; background: #66686c; }

  .ribbon { flex: none; height: 77px; display: flex; border-top: 1px solid #f2f3f5; border-bottom: 1px solid #16171a; color: #6e7074; padding-top: 4px; }
  .big { flex-direction: column; justify-content: flex-start; padding-top: 1px; height: 68px; }
  .big.low { padding-top: 8px; }
  .big .arr { margin-top: auto; margin-bottom: 8px; }
  .big.on { color: #1b1c1e; }
  .big.on .arr { background: #222; }
  .w46 { width: 47px; } .w48 { width: 48px; } .w60 { width: 59px; } .w62 { width: 62px; } .w76 { width: 76px; } .w98 { width: 98px; }
  .rule { width: 1px; height: 65px; background: #4c4e52; margin: 0 0 0 1px; }
  .rule:nth-of-type(1) { margin-left: 4px; }
  .draw { display: grid; grid-template-columns: 36px 36px 36px 20px; grid-auto-rows: 23px; width: 132px; padding-left: 5px; }
  .dt { justify-content: flex-start; gap: 7px; height: 17px; }
  .lines { width: 157px; display: flex; flex-direction: column; gap: 6px; padding-left: 3px; }
  .lines button { height: 17px; justify-content: flex-start; gap: 7px; }
  .lines .arr { margin-left: auto; margin-right: 4px; }

  main { flex: 1; min-height: 0; display: flex; position: relative; border-bottom: 1px solid #16171a; }
  .tabs { position: absolute; z-index: 3; top: -1px; left: 0; display: grid; grid-template-columns: 64px 54px 129px 56px 126px 132px 117px 63px; height: 21px; }
  .tabs button { background: #a9abaf; border: 1px solid #16171a; border-width: 1px 1px 2px 0; padding-bottom: 2px; }
  .tabs .active { background: #d7dadf; border-top-color: #d7dadf; font-weight: 700; }
  aside { flex: none; width: 190px; position: relative; display: flex; flex-direction: column; padding-top: 21px; border-right: 2px solid #16171a; background: #e2e5ea; z-index: 2; }
  .ptabs { flex: none; display: flex; height: 29px; align-items: flex-end; border-top: 2px solid #8b90a8; border-bottom: 1px solid #16171a; background: #d9dce2; }
  .ptabs button { width: 28px; height: 22px; background: #aaacb0; border: 1px solid #16171a; border-width: 1px 1px 0 0; }
  .ptabs .active { background: #e2e5ea; }
  .ptabs .more { width: 22px; margin-left: auto; background: none; border: 0; }
  .filter { flex: none; display: flex; align-items: center; height: 18px; margin: 1px 1px 3px; padding-left: 7px; border: 1px solid #55575b; background: #ebecee; }
  .filter input { flex: 1; min-width: 0; border: 0; background: none; outline: 0; padding: 0; }
  .root { display: flex; align-items: center; gap: 5px; height: 18px; padding-left: 2px; white-space: nowrap; overflow: hidden; flex: none; }
  .root, ul, .tip { font-family: "Noto Sans", "Open Sans", sans-serif; }
  ul { overflow: hidden; flex: none; background: repeating-linear-gradient(#777 0 1px, transparent 1px 2px) 10px 0 / 1px 296px no-repeat; }
  li { position: relative; height: 18px; display: flex; align-items: center; gap: 5px; padding-left: 21px; white-space: nowrap; background: repeating-linear-gradient(90deg, #777 0 1px, transparent 1px 2px) 11px 9px / 10px 1px no-repeat; }
  li.nested { padding-left: 40px; background: repeating-linear-gradient(90deg, #777 0 1px, transparent 1px 2px) 29px 9px / 10px 1px no-repeat, repeating-linear-gradient(#777 0 1px, transparent 1px 2px) 29px 0 / 1px 9px no-repeat; }
  .ex { position: absolute; left: 6px; top: 5px; width: 9px; height: 9px; background: #fafafa; outline: 1px solid #8a8d92; outline-offset: -1px; }
  .rollback { flex: none; height: 2px; background: #2c64ac; }
  .hscroll { margin-top: auto; height: 20px; flex: none; display: flex; align-items: center; padding: 1px 3px 1px; border-bottom: 2px solid #8b90a8; background: #eeeff1; }
  .lt, .rt { width: 14px; height: 14px; }
  .lt::before, .rt::before { content: ""; width: 4px; height: 7px; background: #333; clip-path: polygon(100% 0, 100% 100%, 0 50%); }
  .lt::before { margin-right: 6px; }
  .rt { margin-left: auto; width: 5px; }
  .rt::before { clip-path: polygon(0 0, 100% 50%, 0 100%); }
  .thumb { width: 74px; height: 14px; display: flex; align-items: center; justify-content: center; gap: 2px; border: 1px solid #909296; border-radius: 2px; background: linear-gradient(#f4f4f5, #cfd1d4); }
  .thumb i { width: 1px; height: 6px; background: #444; }
  .split { position: absolute; right: -9px; top: 387px; width: 8px; height: 39px; flex-direction: column; gap: 3px; background: #e2e5ea; border: 1px solid #16171a; border-left: 0; }
  .split i { width: 3px; height: 6px; background: #222; clip-path: polygon(100% 0, 100% 100%, 0 50%); }

  .view { flex: 1; min-width: 0; position: relative; }
  .scene { position: absolute; inset: 0; width: 100%; height: 100%; }
  .scene text { font-family: "Liberation Sans", sans-serif; }
  .hud { position: absolute; top: 23px; left: 380px; display: flex; align-items: center; }
  .docwins { position: absolute; top: 6px; right: 11px; display: flex; gap: 7px; opacity: .85; }
  .confirm { position: absolute; top: 53px; right: 42px; width: 60px; opacity: .28; }
  .confirm .no { margin: 4px 0 0 34px; }
  .task { position: absolute; right: 0; top: 59px; width: 24px; display: flex; flex-direction: column; border: 1px solid #16171a; border-right: 0; }
  .task button { height: 24px; background: #a9abaf; border-bottom: 1px solid #16171a; }
  .task button:last-child { border: 0; height: 23px; }
  .task .active { background: #eceef1; }
  .tip { position: absolute; left: 341px; top: 522px; height: 20px; padding: 2px 6px 2px 5px; white-space: nowrap; color: #55575c; border: 1px solid #767676; border-radius: 2px; background: linear-gradient(#fff, #e6e7f1); box-shadow: 3px 3px 3px #0007; }

  .pm { position: absolute; right: 0; bottom: 0; width: 456px; padding: 6px 6px 10px; border: solid #16171a; border-width: 2px 1px 2px 2px; background: #e2e5ea; }
  .pmhead { display: flex; align-items: center; gap: 3px; height: 25px; padding: 0 6px 0 2px; margin: 0 -1px; border: 1px solid #16171a; background: #a9abaf; }
  .pmhead h2 { flex: 1; font-weight: 700; }
  .pmhead button { font-size: 14px; font-weight: 700; color: #f3f3f4; }
  .pmact { display: flex; align-items: center; gap: 10px; height: 25px; margin-bottom: 10px; padding-left: 1px; }
  .grp { border: 1px solid #16171a; background: #d7dadf; margin-bottom: 13px; padding-bottom: 2px; }
  .grp.last { margin-bottom: 0; }
  .grp h3 { display: flex; align-items: center; justify-content: space-between; height: 19px; padding: 0 2px 0 3px; font-weight: 700; border-bottom: 1px solid #16171a; background: #a9abaf; }
  .corners { display: flex; gap: 3px; padding: 2px 3px 0; }
  .corners button { width: 24px; height: 24px; border: 1px solid #85878b; background: #eceef0; }
  .corners button:last-child { margin-left: 2px; }
  .corners .sel { background: #999b9d; border-color: #55575b; }
  .pick { display: flex; gap: 1px; margin: 2px 4px 8px 3px; }
  .pick i { width: 11px; background: #58a9fb; }
  .pick textarea { flex: 1; height: 70px; resize: none; outline: 0; border: 1px solid #80869a; border-radius: 0; padding: 2px 4px; background: #fff; color: #43454b; overflow: hidden; }
  .pink i { background: #fb7fbc; }
  .pink textarea { height: 73px; border: 2px solid #66b0e2; background: #cfe4f8; }
  .chk { display: flex; align-items: center; gap: 4px; padding-left: 3px; height: 16px; }
  .chk input { appearance: none; width: 12px; height: 12px; border: 1px solid #85878b; background: #f4f5f7; display: grid; place-items: center; }
  .chk input:checked::before { content: ""; width: 8px; height: 8px; background: #3f4f8f; clip-path: polygon(0 45%, 20% 35%, 40% 65%, 85% 0, 100% 5%, 45% 100%); }
  .pt { display: block; width: 170px; margin: 0 0 7px 3px; }
  .ptin { display: block; width: calc(100% - 7px); height: 21px; margin: 0 4px 8px 3px; border: 1px solid #80869a; background: #fff; outline: 0; }

  footer { flex: none; height: 16px; display: flex; border-bottom: 1px solid #16171a; background: #e2e5ea; }
  .steps { display: flex; padding-left: 3px; background: #b7babd; }
  .steps button { width: 15px; border: 1px solid #9d9fa2; margin-right: 1px; }
  .ft { width: 73px; height: 14px; background: #a9abaf; border: 1px solid #16171a; border-width: 0 1px 1px 0; }
  .ft.active { width: 58px; background: #e2e5ea; border-left-width: 1px; font-weight: 700; }
  .ft.wide { width: 109px; }
</style>
